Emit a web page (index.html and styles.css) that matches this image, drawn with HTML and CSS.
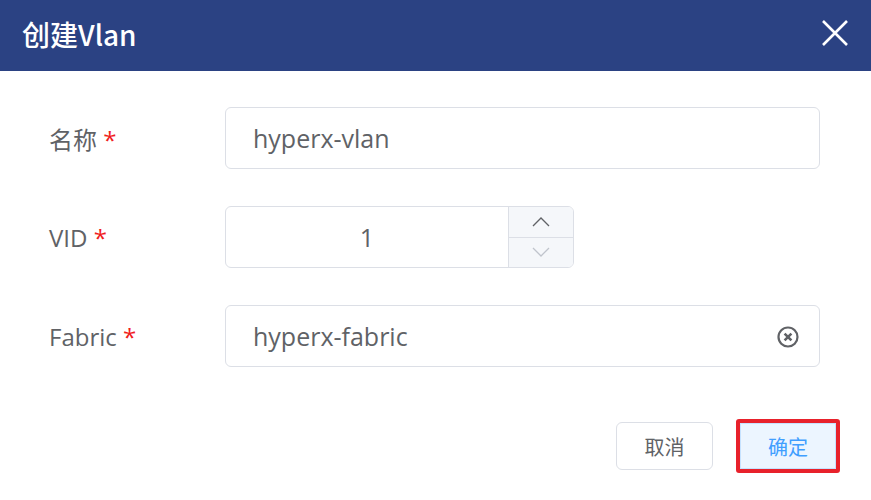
FILE: index.html
```html
<!DOCTYPE html>
<html>
<head>
<meta charset="utf-8">
<link rel="stylesheet" href="styles.css">
</head>
<body>
<div class="dialog">
  <div class="header">
    <span class="title">创建Vlan</span>
    <svg class="close" width="28" height="28" viewBox="0 0 28 28"><path d="M2 2L26 26M26 2L2 26" stroke="#fff" stroke-width="2.6" fill="none"/></svg>
  </div>
  <div class="body">
    <div class="row">
      <label class="label">名称 <span class="req">*</span></label>
      <div class="input wide"><span class="val">hyperx-vlan</span></div>
    </div>
    <div class="row">
      <label class="label">VID <span class="req">*</span></label>
      <div class="input num">
        <span class="numval">1</span>
        <div class="spin">
          <div class="sbtn"><svg width="18" height="10" viewBox="0 0 18 10"><path d="M1 9L9 1L17 9" stroke="#606266" stroke-width="1.3" fill="none"/></svg></div>
          <div class="sbtn down"><svg width="18" height="10" viewBox="0 0 18 10"><path d="M1 1L9 9L17 1" stroke="#c0c4cc" stroke-width="1.3" fill="none"/></svg></div>
        </div>
      </div>
    </div>
    <div class="row">
      <label class="label">Fabric <span class="req">*</span></label>
      <div class="input wide"><span class="val">hyperx-fabric</span>
        <svg class="clear" width="24" height="24" viewBox="0 0 24 24"><circle cx="12" cy="12" r="9.5" stroke="#606266" stroke-width="2.2" fill="none"/><path d="M8.6 8.6L15.4 15.4M15.4 8.6L8.6 15.4" stroke="#606266" stroke-width="2.6"/></svg>
      </div>
    </div>
  </div>
  <div class="footer">
    <button class="btn">取消</button>
    <div class="hl"><button class="btn primary">确定</button></div>
  </div>
</div>
</body>
</html>
```
FILE: styles.css
```css
html, body { margin: 0; padding: 0; background: #fff; }
body { font-family: "Open Sans", "Noto Sans CJK SC", sans-serif; color: #606266; width: 871px; height: 500px; overflow: hidden; }
.header { height: 71px; background: #2b4283; display: flex; align-items: center; justify-content: space-between; padding: 0 22px 0 22px; box-sizing: border-box; }
.title { color: #fff; font-family: "Noto Sans CJK SC", sans-serif; font-size: 28px; font-weight: 500; line-height: 1; margin-top: -4px; }
.close { margin-top: -6px; }
.body { padding: 36px 51px 0 49px; display: flex; flex-direction: column; gap: 37px; }
.row { display: flex; align-items: center; height: 62px; }
.label { width: 176px; font-size: 24px; font-family: "Open Sans", "Noto Sans CJK SC", sans-serif; color: #606266; }
.req { color: #f01d1d; }
.input { height: 62px; box-sizing: border-box; border: 1px solid #dcdfe6; border-radius: 6px; display: flex; align-items: center; font-size: 25px; color: #606266; }
.wide { width: 595px; padding: 0 19px 0 27px; justify-content: space-between; }
.num { width: 349px; position: relative; overflow: hidden; }
.numval { flex: 1; text-align: center; }
.spin { width: 64px; height: 100%; border-left: 1px solid #dcdfe6; background: #f5f7fa; display: flex; flex-direction: column; }
.sbtn { flex: 1; display: flex; align-items: center; justify-content: center; }
.sbtn.down { border-top: 1px solid #dcdfe6; }
.clear { margin-top: 2px; }
.footer { display: flex; justify-content: flex-end; align-items: center; gap: 23px; padding: 52px 31px 0 0; }
.btn { font-family: "Noto Sans CJK SC", sans-serif; font-size: 20px; height: 48px; width: 97px; border: 1px solid #dcdfe6; border-radius: 6px; background: #fff; color: #606266; padding: 0; }
.hl { border: 4px solid #e8212b; border-radius: 3px; }
.btn.primary { background: #ecf5ff; color: #409eff; border: 1px solid #c6e2ff; border-radius: 0; width: 96px; height: 46px; }
```
